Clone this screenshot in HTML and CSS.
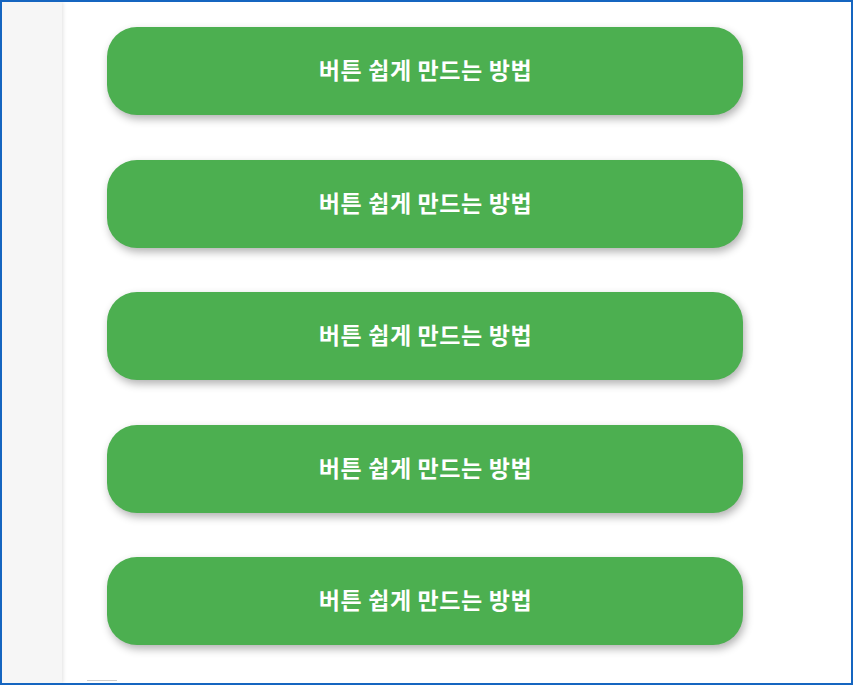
FILE: index.html
```html
<!DOCTYPE html>
<html>
<head>
    <title>Buttons</title>
    <link rel="stylesheet" href="styles.css">
</head>
<body>
    <div class="frame">
        <div class="sidebar"></div>
        <div class="content">
            <button class="btn">버튼 쉽게 만드는 방법</button>
            <button class="btn">버튼 쉽게 만드는 방법</button>
            <button class="btn">버튼 쉽게 만드는 방법</button>
            <button class="btn">버튼 쉽게 만드는 방법</button>
            <button class="btn">버튼 쉽게 만드는 방법</button>
            <div class="rule"></div>
        </div>
    </div>
</body>
</html>
```

FILE: styles.css
```css
body {
    margin: 0;
    font-family: "Noto Sans CJK KR", "Noto Sans", sans-serif;
}

.frame {
    box-sizing: border-box;
    width: 853px;
    height: 685px;
    border: 2px solid #1565c0;
    display: flex;
    overflow: hidden;
    background-color: #fff;
}

.sidebar {
    width: 60px;
    flex-shrink: 0;
    background-color: #f6f6f6;
    box-shadow: 1px 0 4px rgba(0, 0, 0, 0.12);
    position: relative;
}

.content {
    flex: 1;
    padding: 25px 0 0 45px;
    display: flex;
    flex-direction: column;
    align-items: flex-start;
    gap: 44.5px;
}

.btn {
    width: 636px;
    height: 88px;
    flex-shrink: 0;
    padding: 0 0 4px 1px;
    border: none;
    border-radius: 30px;
    background-color: #4caf50;
    color: #fff;
    font-family: inherit;
    font-size: 23px;
    font-weight: bold;
    letter-spacing: 0.6px;
    box-shadow: 2px 4px 8px rgba(0, 0, 0, 0.3);
    cursor: pointer;
}

.rule {
    width: 30px;
    height: 1px;
    margin: -10px 0 0 -20px;
    background-color: #ccc;
    flex-shrink: 0;
}
```
